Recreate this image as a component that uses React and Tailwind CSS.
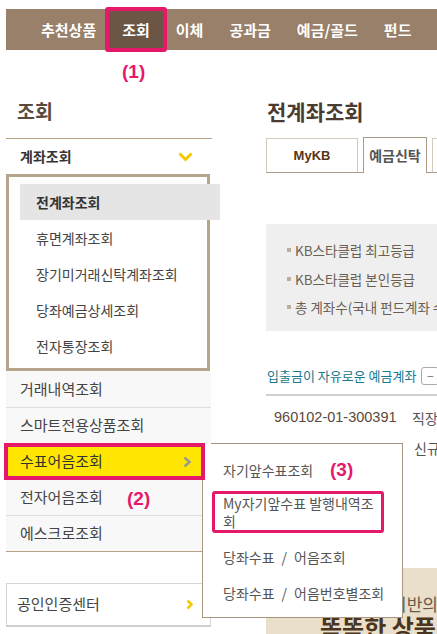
export default function App() {
  const navItems = ["추천상품", "조회", "이체", "공과금", "예금/골드", "펀드"];
  const subItems = ["휴면계좌조회", "장기미거래신탁계좌조회", "당좌예금상세조회", "전자통장조회"];
  return (
    <div className="relative w-[437px] h-[634px] overflow-hidden bg-white font-['Noto_Sans_CJK_KR','Noto_Sans',sans-serif] text-[14px] text-[#444]">
      {/* top nav */}
      <div className="pt-[9px]">
        <div className="ml-[6px] h-[41px] bg-[#98806a] flex items-center pl-[35px] gap-[26px] text-white font-bold text-[15px] leading-none whitespace-nowrap">
          {navItems.map((t) =>
            t === "조회" ? (
              <span key={t} className="relative h-full flex items-center">
                <span className="absolute -top-[2px] -bottom-[2px] -left-[17px] -right-[17px] border-4 border-[#e5186a] bg-[#6b5646] rounded-[3px]"></span>
                <span className="relative">{t}</span>
              </span>
            ) : (
              <span key={t}>{t}</span>
            )
          )}
        </div>
      </div>

      {/* main */}
      <div className="flex ml-[6px]">
        {/* left column */}
        <div className="w-[206px] shrink-0">
          <div className="h-[89px] border-b border-[#b9a488] pt-[49px] pl-[11px] text-[19.5px] leading-[24px] font-bold text-[#5b4a3b]">조회</div>
          <div className="h-[35px] flex items-center justify-between pl-[14px] pr-[19px] font-bold text-[#333]">
            <span>계좌조회</span>
            <svg width="15" height="10" viewBox="0 0 15 10">
              <polyline points="1.5,1.5 7.5,7.5 13.5,1.5" fill="none" stroke="#f6c800" strokeWidth="3" />
            </svg>
          </div>
          <div className="w-[204px] border-[3px] border-[#b7a48d] pt-[7px] pb-[4px]">
            <div className="h-[36px] ml-[11px] w-[200px] pl-[16px] flex items-center bg-[#e5e5e5] font-bold text-[#333] relative">전계좌조회</div>
            {subItems.map((t) => (
              <div key={t} className="h-[36px] ml-[11px] pl-[16px] flex items-center text-[#444]">{t}</div>
            ))}
          </div>
          <div className="w-[205px] bg-[#f8f8f8] text-[15px]">
            <div className="h-[37px] border-b border-[#dedede] flex items-center pl-[14px]">거래내역조회</div>
            <div className="h-[35px] flex items-center pl-[14px]">스마트전용상품조회</div>
            <div className="h-[37px] py-[4px] pl-[2px] bg-white relative z-30">
              <div className="h-full w-[193px] bg-[#ffe600] outline-4 outline-[#e5186a] flex items-center justify-between pl-[12px] pr-[9px] text-[#333]">
                <span>수표어음조회</span>
                <svg width="9" height="12" viewBox="0 0 9 12">
                  <polyline points="1.5,1.5 6.5,6 1.5,10.5" fill="none" stroke="#999" strokeWidth="2.5" />
                </svg>
              </div>
            </div>
            <div className="h-[36px] border-b border-[#dedede] flex items-center pl-[14px]">전자어음조회</div>
            <div className="h-[36px] border-b border-[#b9a488] flex items-center pl-[14px]">에스크로조회</div>
          </div>
          <div className="mt-[31px] w-[205px] h-[44px] border border-[#d5d5d5] border-b-2 border-b-[#cfcfcf] flex items-center justify-between pl-[10px] pr-[16px] text-[15px]">
            <span>공인인증센터</span>
            <svg width="8" height="11" viewBox="0 0 8 11">
              <polyline points="1.5,1.5 5.5,5.5 1.5,9.5" fill="none" stroke="#f6c800" strokeWidth="2.5" />
            </svg>
          </div>
        </div>

        {/* right column */}
        <div className="ml-[54px] flex-1 min-w-0">
          <div className="pt-[49px] pl-[1px] text-[21px] leading-[24px] font-bold text-[#4a3c30] whitespace-nowrap">전계좌조회</div>
          <div className="mt-[14px] h-[36px] flex items-end">
            <div className="w-[92px] h-[35px] border border-[#d3c9bd] border-b-[#a99a89] flex items-center justify-center text-[13px] font-bold text-[#5a3512] font-['Liberation_Sans',sans-serif]">MyKB</div>
            <div className="w-[5px] h-[35px] border-b border-[#a99a89]"></div>
            <div className="w-[64px] h-[36px] border border-[#a89a88] border-b-0 flex items-center justify-center text-[14px] font-bold text-[#555] whitespace-nowrap">예금신탁</div>
            <div className="w-[5px] h-[35px] border-b border-[#a99a89]"></div>
            <div className="flex-1 h-[35px] border border-r-0 border-[#d3c9bd] border-b-[#a99a89]"></div>
          </div>
          <div className="mt-[51px] h-[107px] bg-[#efefef] pt-[12px] pl-[21px] text-[13.5px] leading-[28.5px] text-[#6b5f55] whitespace-nowrap overflow-hidden">
            {["KB스타클럽 최고등급", "KB스타클럽 본인등급", "총 계좌수(국내 펀드계좌 수 포함)"].map((t) => (
              <div key={t} className="flex items-center">
                <span className="inline-block shrink-0 w-[4px] h-[4px] bg-[#bcae9e] mr-[4px]"></span>
                <span>{t}</span>
              </div>
            ))}
          </div>
          <div className="mt-[35px] h-[20px] flex items-center pl-[1px] whitespace-nowrap">
            <span className="text-[13px] text-[#17798b]">입출금이 자유로운 예금계좌</span>
            <span className="ml-[5px] shrink-0 w-[18px] h-[18px] border border-[#aaa] rounded-[3px] flex items-center justify-center text-[#777] text-[12px] leading-none">−</span>
          </div>
          <div className="mt-[8px] border-t-2 border-[#cfcfcf]"></div>
          <div className="h-[44px] flex items-center whitespace-nowrap">
            <span className="pl-[8px] w-[146px] shrink-0 font-['Liberation_Sans',sans-serif] text-[14.5px] text-[#5b4a3b]">960102-01-300391</span>
            <span className="text-[#555]">직장인우대</span>
          </div>
          <div className="h-[16px] flex items-center pl-[148px] whitespace-nowrap text-[#555]">신규</div>
          <div className="mt-[112px] h-[80px] bg-[#eadfca] whitespace-nowrap">
            <div className="pt-[26px] pl-[125px] text-[17px] leading-[20px] text-[#6b5a48]">이반의</div>
            <div className="pl-[54px] text-[24px] leading-[26px] font-bold text-[#4a3520]">똑똑한 상품</div>
          </div>
        </div>
      </div>

      {/* popup submenu */}
      <div className="absolute left-[202px] top-[443px] w-[201px] h-[175px] border border-[#a8967f] bg-white pt-[8px] px-[10px] text-[14px] text-[#555] z-20 whitespace-nowrap">
        <div className="h-[36px] flex items-center pl-[10px]">자기앞수표조회</div>
        <div className="mt-[3px] -ml-[1px] w-[172px] h-[42px] border-[3px] border-[#e5186a] rounded-[3px] pl-[8px] leading-[18px]">
          My자기앞수표 발행내역조<br />회
        </div>
        <div className="mt-[6px] h-[36px] flex items-center pl-[10px]">
          <span>당좌수표</span><span className="px-[7px]">/</span><span>어음조회</span>
        </div>
        <div className="h-[36px] flex items-center pl-[10px]">
          <span>당좌수표</span><span className="px-[7px]">/</span><span>어음번호별조회</span>
        </div>
      </div>

      {/* annotation labels */}
      <div className="absolute left-[122px] top-[61px] text-[19px] leading-[22px] font-bold text-[#e5186a] font-['Liberation_Sans',sans-serif] z-40">(1)</div>
      <div className="absolute left-[127px] top-[488px] text-[19px] leading-[22px] font-bold text-[#e5186a] font-['Liberation_Sans',sans-serif] z-40">(2)</div>
      <div className="absolute left-[330px] top-[459px] text-[19px] leading-[22px] font-bold text-[#e5186a] font-['Liberation_Sans',sans-serif] z-40">(3)</div>
    </div>
  );
}
